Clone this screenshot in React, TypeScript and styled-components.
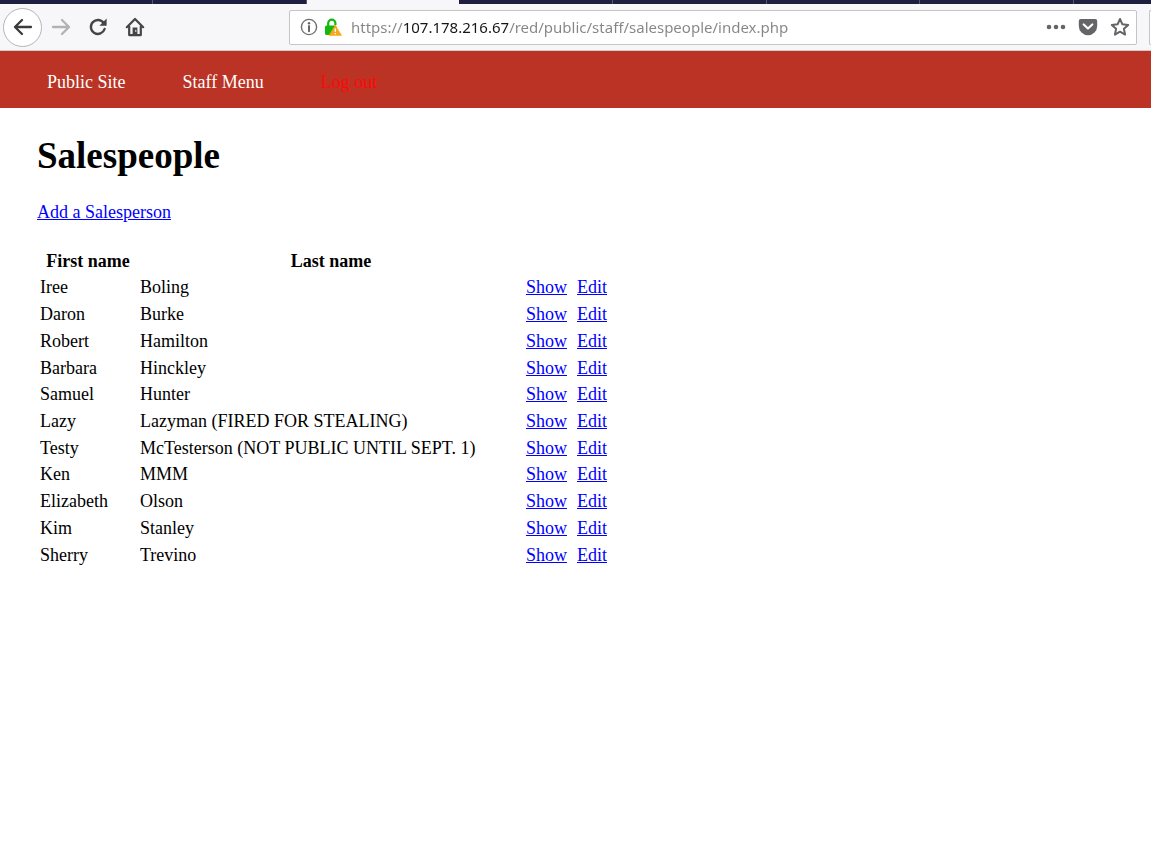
import React from 'react';
import styled, { createGlobalStyle } from 'styled-components';

const GlobalStyle = createGlobalStyle`
  * { box-sizing: border-box; }
  body {
    margin: 0;
    background: #fff;
    color: #000;
    font: 18px/26px "Liberation Serif", "Times New Roman", serif;
  }
`;

const TabStrip = styled.div`
  display: grid;
  grid-template-columns: 153px 154px 152px 154px 154px 153px 154px 1fr;
  height: 4px;
`;

const Tab = styled.div<{ $active?: boolean }>`
  background: ${(p) => (p.$active ? '#f7f7f9' : '#1d1e40')};
  border-right: ${(p) => (p.$active ? '0' : '1px solid #55566f')};
  &:last-child { border-right: 0; }
`;

const Toolbar = styled.div`
  display: flex;
  align-items: center;
  height: 47px;
  padding-left: 3px;
  background: #f7f7f9;
  border-bottom: 1px solid #d0cccc;
`;

const NavButtons = styled.div`
  display: flex;
  align-items: center;
  flex: none;
  width: 286px;
`;

const ToolButton = styled.button<{ $round?: boolean }>`
  display: flex;
  align-items: center;
  justify-content: center;
  flex: none;
  width: ${(p) => (p.$round ? '39px' : '37px')};
  height: 39px;
  padding: 0;
  border: ${(p) => (p.$round ? '1px solid #b5b5b7' : '0')};
  border-radius: 50%;
  background: ${(p) => (p.$round ? '#fff' : 'transparent')};
`;

const AddressBar = styled.form`
  display: flex;
  align-items: center;
  flex: 1;
  min-width: 0;
  height: 35px;
  padding-left: 9px;
  background: #fff;
  border: 1px solid #c5c5c7;
  border-radius: 2px;
`;

const BarButton = styled.button<{ $width: number }>`
  display: flex;
  align-items: center;
  justify-content: center;
  flex: none;
  width: ${(p) => p.$width}px;
  height: 30px;
  padding: 0;
  border: 0;
  background: transparent;
`;

const UrlInput = styled.input`
  flex: 1;
  min-width: 0;
  height: 30px;
  margin-left: 4px;
  padding: 0;
  border: 0;
  outline: 0;
  color: #858585;
  font: 15px/30px "Noto Sans", "Open Sans", sans-serif;
  background: linear-gradient(90deg, #858585 52px, #161616 52px 158px, #858585 158px);
  background-clip: text;
  -webkit-background-clip: text;
  -webkit-text-fill-color: transparent;
`;

const SearchEdge = styled.div`
  flex: none;
  width: 2px;
  height: 35px;
  margin-left: 12px;
  background: #fff;
  border: 1px solid #c5c5c7;
  border-right: 0;
  border-radius: 2px 0 0 2px;
`;

const SiteNav = styled.nav`
  display: flex;
  align-items: center;
  gap: 57px;
  height: 57px;
  padding: 5px 47px 0;
  background: #bb3324;
`;

const NavLink = styled.a<{ $alert?: boolean }>`
  color: ${(p) => (p.$alert ? '#ff0808' : '#fff')};
  text-decoration: none;
`;

const Content = styled.main`
  padding: 26px 37px;
`;

const Title = styled.h1`
  margin: 0 0 22px;
  font-size: 37px;
  line-height: 43px;
`;

const Link = styled.a`
  color: #0000ff;
`;

const Intro = styled.p`
  margin: 0 0 22px;
`;

const PeopleTable = styled.table`
  height: 321px;
  border-spacing: 0;
`;

const Head = styled.th`
  height: 27px;
  padding: 0 1px 0 3px;
  text-align: center;
`;

const Cell = styled.td`
  padding: 0 0 0 3px;
  white-space: nowrap;
`;

const Column = styled.col<{ $width: number }>`
  width: ${(p) => p.$width}px;
`;

const people = [
  ['Iree', 'Boling'],
  ['Daron', 'Burke'],
  ['Robert', 'Hamilton'],
  ['Barbara', 'Hinckley'],
  ['Samuel', 'Hunter'],
  ['Lazy', 'Lazyman (FIRED FOR STEALING)'],
  ['Testy', 'McTesterson (NOT PUBLIC UNTIL SEPT. 1)'],
  ['Ken', 'MMM'],
  ['Elizabeth', 'Olson'],
  ['Kim', 'Stanley'],
  ['Sherry', 'Trevino'],
];

const ArrowIcon = ({ color, flip }: { color: string; flip?: boolean }) => (
  <svg width="20" height="20" viewBox="0 0 20 20" fill="none" stroke={color} strokeWidth="2.3" strokeLinecap="round" strokeLinejoin="round">
    {flip ? <path d="M2 10h16M11 3l7 7-7 7" /> : <path d="M18 10H2M9 3l-7 7 7 7" />}
  </svg>
);

const ReloadIcon = () => (
  <svg width="20" height="20" viewBox="0 0 20 20" fill="none" stroke="#454547" strokeWidth="2.4">
    <path d="M15.8 6.2A7 7 0 1 0 16.6 12" strokeLinecap="round" />
    <path d="M18.6 1.6v7.2h-7.2z" fill="#454547" stroke="none" />
  </svg>
);

const HomeIcon = () => (
  <svg width="20" height="20" viewBox="0 0 20 20" fill="none" stroke="#454547" strokeWidth="2.2" strokeLinejoin="round" strokeLinecap="round">
    <path d="M1.8 10.2 10 2l8.2 8.2" />
    <path d="M4.2 9.5v8.6h11.6V9.5" />
    <path d="M7.6 17.5v-7h4.8v7z" fill="#454547" stroke="none" />
    <path d="M10.8 13.2v1.4" stroke="#fff" strokeWidth="0.9" />
  </svg>
);

const InfoIcon = () => (
  <svg width="18" height="18" viewBox="0 0 18 18">
    <circle cx="9" cy="9" r="7.6" fill="none" stroke="#707072" strokeWidth="1.4" />
    <circle cx="9" cy="5.3" r="1.2" fill="#68686a" />
    <path d="M9 8v5.2" stroke="#68686a" strokeWidth="2" strokeLinecap="round" />
  </svg>
);

const LockIcon = () => (
  <svg width="18" height="18" viewBox="0 0 18 18">
    <path d="M4.2 9V5.3a3.6 3.6 0 0 1 7.2 0V7" fill="none" stroke="#16b90b" strokeWidth="2.2" />
    <rect x="1" y="7.5" width="11.5" height="9.5" rx="1.5" fill="#16b90b" />
    <path d="M11.3 7.2 17.6 17.6H5z" fill="#f6a81c" stroke="#f6a81c" strokeWidth="0.6" strokeLinejoin="round" />
    <path d="M11.3 10.6v3.2M11.3 15v1.3" stroke="#fff" strokeWidth="1.4" />
  </svg>
);

const DotsIcon = () => (
  <svg width="20" height="6" viewBox="0 0 20 6" fill="#656567">
    <circle cx="3" cy="3" r="2.3" />
    <circle cx="10" cy="3" r="2.3" />
    <circle cx="17" cy="3" r="2.3" />
  </svg>
);

const PocketIcon = () => (
  <svg width="20" height="18" viewBox="0 0 20 18">
    <path d="M2.8 1h14.4A2 2 0 0 1 19.2 3v5a9.2 9.2 0 0 1-18.4 0V3a2 2 0 0 1 2-2z" fill="#656567" />
    <path d="m5.7 6.5 4.3 4 4.3-4" fill="none" stroke="#fff" strokeWidth="2.2" strokeLinecap="round" strokeLinejoin="round" />
  </svg>
);

const StarIcon = () => (
  <svg width="20" height="20" viewBox="0 0 20 20">
    <path d="m10 2 2.4 5.3 5.8.6-4.3 3.9 1.2 5.8L10 14.7l-5.1 2.9 1.2-5.8L1.8 7.9l5.8-.6z" fill="none" stroke="#656567" strokeWidth="2" strokeLinejoin="round" />
  </svg>
);

export default function App() {
  return (
    <>
      <GlobalStyle />
      <header>
        <TabStrip>
          {Array.from({ length: 8 }, (_, i) => (
            <Tab key={i} $active={i === 2} />
          ))}
        </TabStrip>
        <Toolbar>
          <NavButtons>
            <ToolButton $round aria-label="Back"><ArrowIcon color="#3b3b3d" /></ToolButton>
            <ToolButton aria-label="Forward"><ArrowIcon color="#b2b2b4" flip /></ToolButton>
            <ToolButton aria-label="Reload"><ReloadIcon /></ToolButton>
            <ToolButton aria-label="Home"><HomeIcon /></ToolButton>
          </NavButtons>
          <AddressBar onSubmit={(e) => e.preventDefault()}>
            <BarButton type="button" $width={20} aria-label="Site information"><InfoIcon /></BarButton>
            <BarButton type="button" $width={28} aria-label="Connection security"><LockIcon /></BarButton>
            <UrlInput
              aria-label="Address"
              spellCheck={false}
              defaultValue="https://107.178.216.67/red/public/staff/salespeople/index.php"
            />
            <BarButton type="button" $width={32} aria-label="Page actions"><DotsIcon /></BarButton>
            <BarButton type="button" $width={32} aria-label="Save to Pocket"><PocketIcon /></BarButton>
            <BarButton type="button" $width={32} aria-label="Bookmark this page"><StarIcon /></BarButton>
          </AddressBar>
          <SearchEdge />
        </Toolbar>
      </header>
      <SiteNav>
        <NavLink href="#public">Public Site</NavLink>
        <NavLink href="#staff">Staff Menu</NavLink>
        <NavLink href="#logout" $alert>Log out</NavLink>
      </SiteNav>
      <Content>
        <Title>Salespeople</Title>
        <Intro><Link href="#new">Add a Salesperson</Link></Intro>
        <PeopleTable>
          <colgroup>
            <Column $width={100} />
            <Column $width={386} />
            <Column $width={51} />
            <Column $width={36} />
          </colgroup>
          <thead>
            <tr>
              <Head scope="col">First name</Head>
              <Head scope="col">Last name</Head>
              <Cell />
              <Cell />
            </tr>
          </thead>
          <tbody>
            {people.map(([first, last]) => (
              <tr key={first}>
                <Cell>{first}</Cell>
                <Cell>{last}</Cell>
                <Cell><Link href="#show">Show</Link></Cell>
                <Cell><Link href="#edit">Edit</Link></Cell>
              </tr>
            ))}
          </tbody>
        </PeopleTable>
      </Content>
    </>
  );
}
